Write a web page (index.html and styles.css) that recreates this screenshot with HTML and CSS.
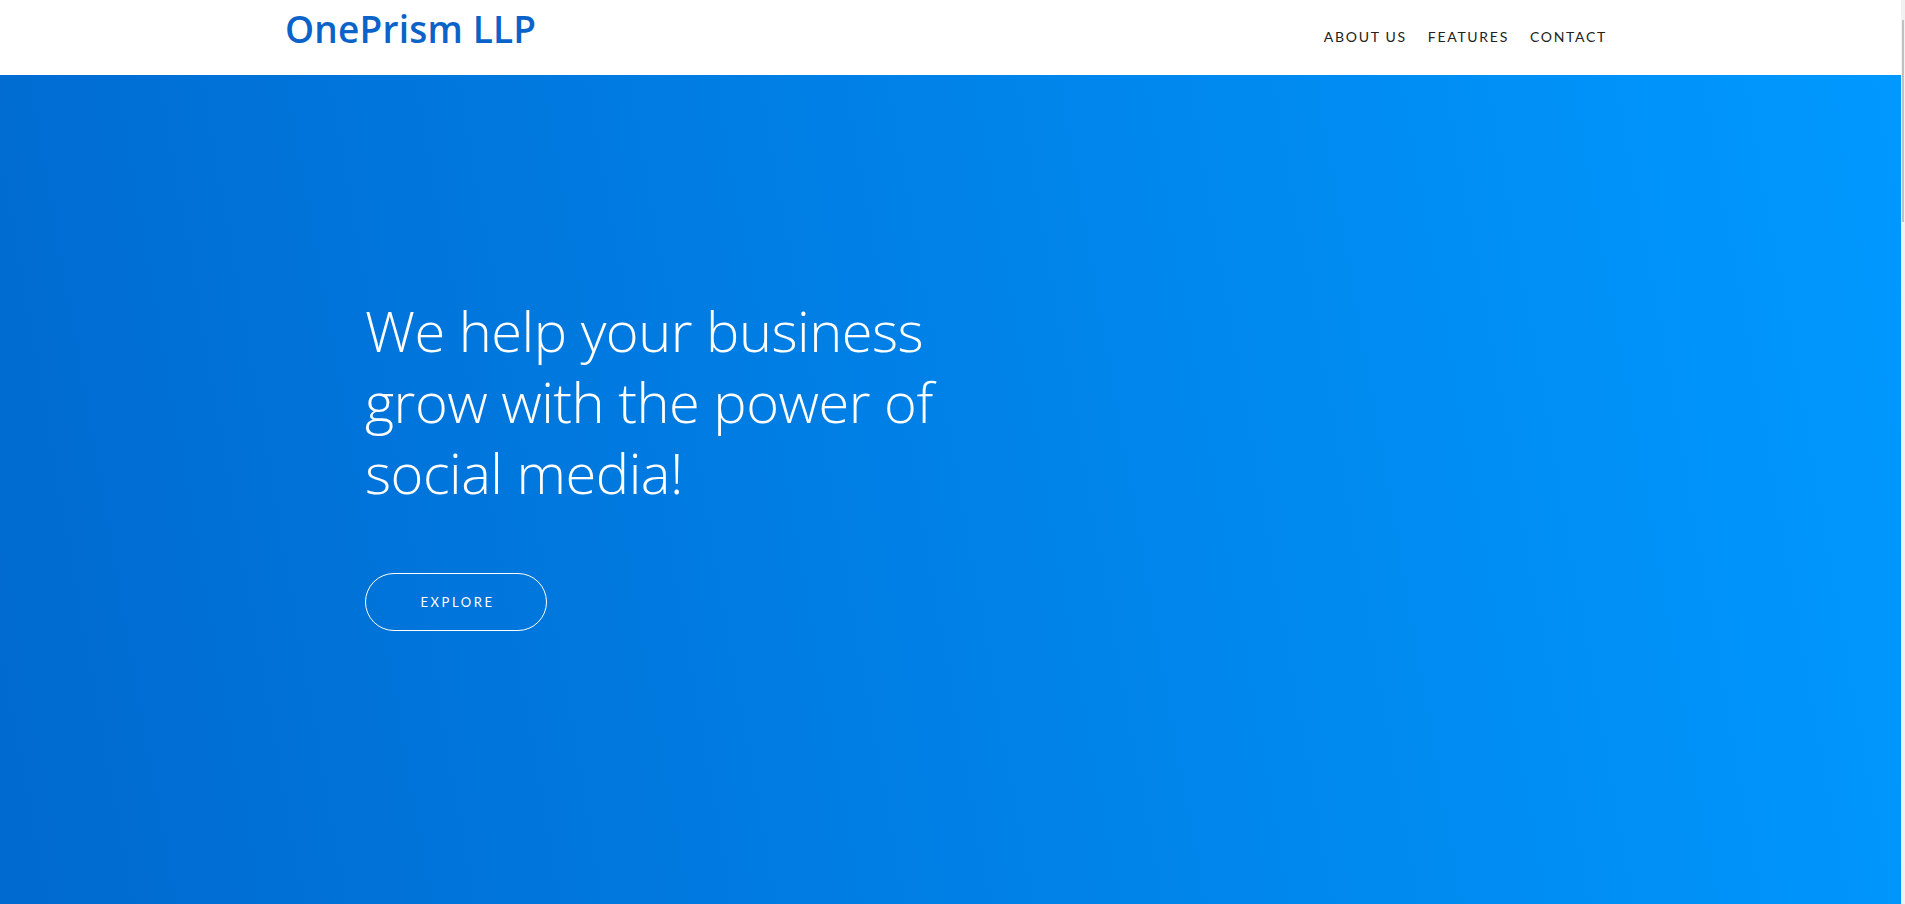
FILE: index.html
```html
<!DOCTYPE html>
<html lang="en">
<head>
<meta charset="utf-8">
<title>OnePrism LLP</title>
<link rel="stylesheet" href="styles.css">
</head>
<body>
<header class="site-header">
  <div class="container header-inner">
    <a class="logo" href="#">OnePrism LLP</a>
    <nav class="main-nav">
      <a href="#about">ABOUT US</a>
      <a href="#features">FEATURES</a>
      <a href="#contact">CONTACT</a>
    </nav>
  </div>
</header>
<section class="hero">
  <div class="container hero-inner">
    <h1 class="hero-title">We help your business grow with the power of social media!</h1>
    <a class="btn-explore" href="#about">EXPLORE</a>
  </div>
</section>
<div class="scrollbar" aria-hidden="true"><div class="scrollbar-thumb"></div></div>
</body>
</html>
```
FILE: styles.css
```css
* { box-sizing: border-box; }
html, body { margin: 0; padding: 0; }
html { scrollbar-width: none; }
body {
  font-family: "Open Sans", "Noto Sans", sans-serif;
  color: #222;
  background: #fff;
}
a { text-decoration: none; }
.container {
  width: 1335px;
  padding-right: 15px;
  margin: 0 auto;
}
.site-header {
  height: 75px;
  background: #fff;
}
.header-inner {
  height: 75px;
  display: flex;
  align-items: flex-start;
  justify-content: space-between;
}
.logo {
  font-family: "Open Sans", sans-serif;
  font-weight: 600;
  font-size: 37px;
  line-height: 1;
  padding-top: 10px;
  color: #0b63c9;
  letter-spacing: 0.2px;
}
.main-nav {
  display: flex;
  gap: 21px;
  padding-top: 29px;
}
.main-nav a {
  font-family: Lato, sans-serif;
  font-size: 14px;
  line-height: 16px;
  letter-spacing: 1.7px;
  color: #222;
}
.main-nav a:last-child { margin-right: -2px; }
.hero {
  min-height: 1600px;
  background: linear-gradient(80deg, #0066cc 0%, #0099ff 100%);
}
.hero-inner {
  padding: 220px 15px 0 80px;
}
.hero-title {
  margin: 0;
  width: 620px;
  font-family: "Open Sans", sans-serif;
  font-weight: 300;
  font-size: 56px;
  line-height: 71px;
  color: #fff;
  letter-spacing: -0.5px;
}
.btn-explore {
  display: inline-flex;
  align-items: center;
  justify-content: center;
  margin-top: 65px;
  width: 182px;
  height: 58px;
  border: 1px solid #fff;
  border-radius: 29px;
  color: #fff;
  font-family: Lato, sans-serif;
  font-size: 13px;
  letter-spacing: 2.6px;
  padding-left: 3px;
}
.scrollbar {
  position: fixed;
  top: 0;
  right: 0;
  width: 4px;
  height: 100vh;
  background: #f1f1f1;
  padding-top: 20px;
}
.scrollbar-thumb {
  margin-left: 1px;
  width: 2px;
  height: 202px;
  background: #c1c1c1;
}
```
